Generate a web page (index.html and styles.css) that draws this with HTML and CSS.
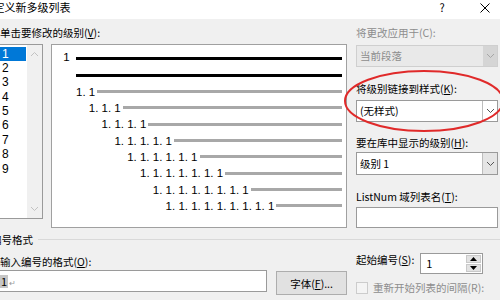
FILE: index.html
```html
<!DOCTYPE html>
<html lang="zh-CN">
<head>
   <meta charset="UTF-8">
   <title>定义新多级列表</title>
   <link rel="stylesheet" href="styles.css">
</head>
<body>
   <div class="titlebar">
       <span class="title">定义新多级列表</span>
       <span class="help">?</span>
       <svg class="close" width="10" height="10" viewBox="0 0 10 10"><path d="M0.5 0.5 L9.5 9.5 M9.5 0.5 L0.5 9.5" stroke="#000" stroke-width="1" fill="none"/></svg>
   </div>
   <div class="dialog">
       <div class="top">
           <div class="levels">
               <div class="lbl">单击要修改的级别(<u>V</u>):</div>
               <div class="level-row">
                   <div class="listbox">
                       <ul class="items">
                           <li class="sel">1</li>
                           <li>2</li>
                           <li>3</li>
                           <li>4</li>
                           <li>5</li>
                           <li>6</li>
                           <li>7</li>
                           <li>8</li>
                           <li>9</li>
                       </ul>
                       <div class="vscroll">
                           <svg width="9" height="6" viewBox="0 0 9 6"><path d="M1 5 L4.5 1.5 L8 5" stroke="#c2c2c2" fill="none"/></svg>
                           <svg width="9" height="6" viewBox="0 0 9 6"><path d="M1 1 L4.5 4.5 L8 1" stroke="#c2c2c2" fill="none"/></svg>
                       </div>
                   </div>
                   <div class="preview">
                       <div class="row lv1"><span class="num">1</span><span class="bar black first"></span></div>
                       <div class="row cont"><span class="bar black"></span></div>
                       <div class="row lv2"><span class="num">1. 1</span><span class="bar"></span></div>
                       <div class="row lv3"><span class="num">1. 1. 1</span><span class="bar"></span></div>
                       <div class="row lv4"><span class="num">1. 1. 1. 1</span><span class="bar"></span></div>
                       <div class="row lv5"><span class="num">1. 1. 1. 1. 1</span><span class="bar"></span></div>
                       <div class="row lv6"><span class="num">1. 1. 1. 1. 1. 1</span><span class="bar"></span></div>
                       <div class="row lv7"><span class="num">1. 1. 1. 1. 1. 1. 1</span><span class="bar"></span></div>
                       <div class="row lv8"><span class="num">1. 1. 1. 1. 1. 1. 1. 1</span><span class="bar"></span></div>
                       <div class="row lv9"><span class="num">1. 1. 1. 1. 1. 1. 1. 1. 1</span><span class="bar"></span></div>
                   </div>
               </div>
           </div>
           <div class="side">
               <div class="lbl dim">将更改应用于(C):</div>
               <div class="combo disabled c1">
                   <span class="val">当前段落</span>
                   <span class="drop"><svg width="9" height="6" viewBox="0 0 9 6"><path d="M1 1 L4.5 4.5 L8 1" stroke="#a6a6a6" fill="none"/></svg></span>
               </div>
               <div class="lbl l2">将级别链接到样式(<u>K</u>):</div>
               <div class="combo c2">
                   <span class="val">(无样式)</span>
                   <span class="drop line"><svg width="9" height="6" viewBox="0 0 9 6"><path d="M1 1 L4.5 4.5 L8 1" stroke="#555" fill="none"/></svg></span>
               </div>
               <div class="lbl l3">要在库中显示的级别(<u>H</u>):</div>
               <div class="combo c3">
                   <span class="val">级别 1</span>
                   <span class="drop shade"><svg width="9" height="6" viewBox="0 0 9 6"><path d="M1 1 L4.5 4.5 L8 1" stroke="#555" fill="none"/></svg></span>
               </div>
               <div class="lbl l4">ListNum 域列表名(<u>T</u>):</div>
               <div class="textbox"></div>
           </div>
       </div>
       <div class="group">
           <span class="group-name">编号格式</span>
           <span class="rule"></span>
       </div>
       <div class="bottom">
           <div class="format">
               <div class="lbl">输入编号的格式(<u>O</u>):</div>
               <div class="format-row">
                   <div class="format-box"><span class="hl">1</span><span class="mark">↵</span></div>
                   <button class="btn">字体(<u>F</u>)...</button>
               </div>
           </div>
           <div class="start">
               <div class="start-row">
                   <span class="lbl">起始编号(<u>S</u>):</span>
                   <div class="spin">
                       <span class="val">1</span>
                       <span class="arrows">
                           <span class="arr"><svg width="7" height="4" viewBox="0 0 7 4"><path d="M0 4 L3.5 0 L7 4 Z" fill="#000"/></svg></span>
                           <span class="arr"><svg width="7" height="4" viewBox="0 0 7 4"><path d="M0 0 L3.5 4 L7 0 Z" fill="#000"/></svg></span>
                       </span>
                   </div>
               </div>
               <div class="check-row">
                   <span class="check"></span>
                   <span class="dim">重新开始列表的间隔(R):</span>
               </div>
           </div>
       </div>
   </div>
   <svg class="mark-ring" width="500" height="300" viewBox="0 0 500 300">
       <ellipse cx="424" cy="101" rx="79" ry="30" fill="none" stroke="#e02a2a" stroke-width="2"/>
   </svg>
</body>
</html>
```

FILE: styles.css
```css
body {
    margin: 0;
    width: 500px;
    height: 300px;
    overflow: hidden;
    background-color: #f0f0f0;
    font-family: "Noto Sans CJK SC", "Noto Sans", sans-serif;
    font-size: 10.5px;
    color: #000;
    position: relative;
}
u {
    text-decoration-thickness: 1px;
    text-underline-offset: 1px;
}
.titlebar {
    height: 19px;
    background-color: #fff;
    display: flex;
    align-items: flex-start;
    line-height: 15px;
    font-size: 11px;
}
.title {
    margin-left: -6.5px;
    flex: 1;
}
.help {
    width: 10px;
    text-align: center;
    margin-right: 33px;
}
.close {
    margin-top: 3px;
    margin-right: 10px;
}
.dialog {
    padding-top: 7px;
}
.lbl {
    line-height: 14px;
    height: 14px;
    white-space: nowrap;
}
.dim {
    color: #8d8d8d;
}
.top {
    display: flex;
    gap: 9px;
}
.levels {
    width: 347px;
}
.level-row {
    display: flex;
    align-items: flex-start;
    margin-top: 4px;
}
.listbox {
    margin-left: -2px;
    width: 43px;
    height: 173px;
    border: 1px solid #9a9a9a;
    background-color: #fff;
    display: flex;
}
.items {
    list-style: none;
    margin: 0;
    padding: 1.5px 0 0 0;
    width: 28px;
    font-family: "Liberation Sans", Arial, sans-serif;
    font-size: 12px;
}
.items li {
    height: 14.4px;
    line-height: 14.4px;
    padding-left: 3px;
}
.items li.sel {
    background-color: #0078d7;
    color: #fff;
    margin-right: 1px;
}
.vscroll {
    width: 15px;
    background-color: #f0f0f0;
    display: flex;
    flex-direction: column;
    justify-content: space-between;
    align-items: center;
    padding: 6px 0 6px 0;
}
.preview {
    margin-left: 8px;
    width: 294px;
    height: 176.2px;
    padding: 5.8px 4px 0 0;
    border: 1px solid #a0a0a0;
    background-color: #fff;
    font-family: "Liberation Sans", Arial, sans-serif;
    font-size: 11.5px;
}
.row {
    height: 16.33px;
    display: flex;
    align-items: center;
    white-space: nowrap;
}
.num {
    line-height: 12px;
}
.bar {
    flex: 1;
    height: 3px;
    margin-left: 2px;
    background-color: #a8a8a8;
}
.bar.black {
    background-color: #000;
}
.bar.first {
    margin-left: 6.4px;
}
.lv1 .num {
    margin-bottom: 4px;
}
.lv1 { padding-left: 11.2px; }
.cont { padding-left: 24px; }
.cont .bar { margin-left: 0; }
.lv2 { padding-left: 24px; }
.lv3 { padding-left: 36.8px; }
.lv4 { padding-left: 49.6px; }
.lv5 { padding-left: 62.4px; }
.lv6 { padding-left: 75.2px; }
.lv7 { padding-left: 88px; }
.lv8 { padding-left: 100.8px; }
.lv9 { padding-left: 113.6px; }
.side {
    width: 142px;
    display: flex;
    flex-direction: column;
}
.combo {
    height: 20px;
    border: 1px solid #9a9a9a;
    background-color: #fff;
    display: flex;
    align-items: stretch;
    line-height: 20px;
}
.combo .val {
    flex: 1;
    padding-left: 3px;
}
.combo .drop {
    width: 14px;
    display: flex;
    align-items: center;
    justify-content: center;
}
.combo .drop.line {
    border-left: 1px solid #bdbdbd;
}
.combo .drop.shade {
    border-left: 1px solid #bdbdbd;
    background-color: #e5e5e5;
}
.combo.disabled {
    background-color: #e9e9e9;
    border-color: #cfcfcf;
    color: #8d8d8d;
}
.combo.disabled .drop {
    background-color: #d5d5d5;
}
.c1 { margin-top: 5px; }
.l2 { margin-top: 15px; }
.c2 { margin-top: 4px; }
.l3 { margin-top: 14px; }
.c3 { margin-top: 2px; height: 21px; line-height: 21px; }
.l4 { margin-top: 15px; }
.textbox {
    margin-top: 3px;
    height: 19px;
    border: 1px solid #9a9a9a;
    background-color: #fff;
}
.group {
    display: flex;
    align-items: center;
    margin-top: 5px;
    margin-left: -9px;
    height: 14px;
    line-height: 14px;
}
.rule {
    flex: 1;
    height: 1px;
    margin-left: 5px;
    margin-top: -1px;
    background-color: #d9d9d9;
}
.bottom {
    display: flex;
    gap: 9px;
}
.format {
    width: 347px;
}
.format .lbl {
    margin-top: 8px;
}
.format-row {
    display: flex;
    align-items: flex-start;
    margin-top: 1px;
}
.format-box {
    margin-left: -2px;
    width: 268px;
    height: 20px;
    border: 1px solid #9a9a9a;
    background-color: #fff;
    display: flex;
    align-items: center;
    font-size: 11px;
}
.hl {
    margin-left: 1px;
    padding: 0 1px;
    line-height: 13px;
    background-color: #c6c6c6;
}
.mark {
    font-size: 8px;
    color: #9a9a9a;
    margin-left: 1px;
    margin-top: 3px;
}
.btn {
    margin: 1px 0 0 9px;
    width: 71px;
    height: 24px;
    padding: 0;
    border: 1px solid #adadad;
    background-color: #e1e1e1;
    font-family: inherit;
    font-size: 10.5px;
    color: #000;
}
.start {
    display: flex;
    flex-direction: column;
}
.start-row {
    display: flex;
    align-items: flex-start;
    margin-top: 6px;
}
.spin {
    margin-left: 6px;
    width: 61px;
    height: 19px;
    border: 1px solid #9a9a9a;
    background-color: #fff;
    display: flex;
    font-size: 11px;
}
.spin .val {
    flex: 1;
    padding-left: 5px;
    line-height: 19px;
}
.arrows {
    width: 15px;
    display: flex;
    flex-direction: column;
    gap: 1px;
    padding: 1px 1px 1px 0;
}
.arr {
    flex: 1;
    background-color: #e3e3e3;
    border: 1px solid #c9c9c9;
    display: flex;
    align-items: center;
    justify-content: center;
}
.check-row {
    display: flex;
    align-items: center;
    margin-top: 7px;
    line-height: 14px;
}
.check {
    width: 10px;
    height: 10px;
    border: 1px solid #cccccc;
    background-color: #f4f4f4;
    margin-right: 5px;
}
.mark-ring {
    position: absolute;
    top: 0;
    left: 0;
    pointer-events: none;
}
```
